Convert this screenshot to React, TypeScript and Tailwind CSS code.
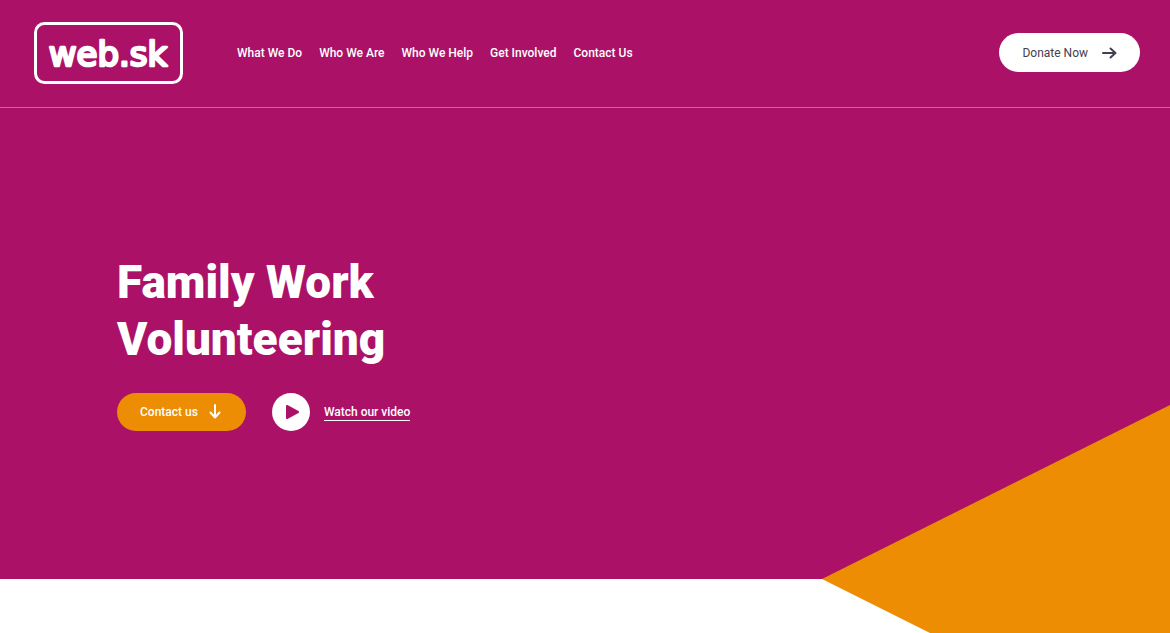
const navItems = ["What We Do", "Who We Are", "Who We Help", "Get Involved", "Contact Us"];

function ArrowIcon({ className }: { className: string }) {
  return (
    <svg
      className={className}
      viewBox="0 0 16 14"
      width="16"
      height="14"
      fill="none"
      stroke="currentColor"
      strokeWidth="2"
      strokeLinecap="round"
      strokeLinejoin="round"
      aria-hidden="true"
    >
      <path d="M1 7H13M8.5 2.5L13.5 7L8.5 11.5" />
    </svg>
  );
}

function Header() {
  return (
    <header className="flex items-center border-b border-[#cf62a2] pt-[22px] pr-[30px] pb-6 pl-[34px]">
      <a href="#home" aria-label="web.sk" className="shrink-0">
        <svg width="149" height="61" viewBox="0 0 149 61" className="overflow-visible" aria-hidden="true">
          <rect x="1.5" y="1.5" width="146" height="59" rx="9" fill="none" stroke="#fff" strokeWidth="3" />
          <text
            x="74"
            y="44"
            textAnchor="middle"
            fill="#fff"
            stroke="#fff"
            strokeWidth="2.6"
            strokeLinejoin="round"
            fontSize="34"
            fontFamily="'DejaVu Sans', sans-serif"
          >
            web.sk
          </text>
        </svg>
      </a>
      <nav className="ml-[54px] flex gap-[17px] text-[12px] leading-4 font-medium whitespace-nowrap">
        {navItems.map((item) => (
          <a key={item} href="#menu">
            {item}
          </a>
        ))}
      </nav>
      <button
        type="button"
        className="ml-auto flex h-[39px] items-center gap-[14px] rounded-full bg-white pr-[22px] pl-[23px] text-[12px] leading-4 whitespace-nowrap text-[#43404f]"
      >
        Donate Now
        <ArrowIcon className="shrink-0" />
      </button>
    </header>
  );
}

function Hero() {
  return (
    <main className="flex min-h-[471px] flex-col items-start justify-center px-[10%] pb-[2px]">
      <h1 className="text-[46px] leading-[57px] font-black">
        Family Work
        <br />
        Volunteering
      </h1>
      <div className="mt-[25px] flex items-center">
        <button
          type="button"
          className="flex h-[38px] items-center gap-[9px] rounded-full bg-[#ec8d03] pr-[23px] pl-[23px] text-[12px] leading-4 font-medium whitespace-nowrap"
        >
          Contact us
          <ArrowIcon className="shrink-0 rotate-90" />
        </button>
        <a href="#video" className="ml-[26px] flex items-center gap-[14px] text-[12px] leading-4 font-medium">
          <svg width="38" height="38" viewBox="0 0 38 38" aria-hidden="true">
            <circle cx="19" cy="19" r="19" fill="#fff" />
            <path d="M15 13L26 19L15 25Z" fill="#ab1167" stroke="#ab1167" strokeWidth="2" strokeLinejoin="round" />
          </svg>
          <span className="border-b border-white">Watch our video</span>
        </a>
      </div>
    </main>
  );
}

export default function App() {
  return (
    <div className="relative min-h-screen overflow-hidden bg-white font-['Roboto',sans-serif]">
      <div className="bg-[#ab1167] text-white">
        <Header />
        <Hero />
      </div>
      <svg
        className="pointer-events-none absolute top-[405px] right-0"
        width="348"
        height="348"
        viewBox="0 0 348 348"
        aria-hidden="true"
      >
        <path d="M0 174L348 0V348Z" fill="#ec8d03" />
      </svg>
    </div>
  );
}
